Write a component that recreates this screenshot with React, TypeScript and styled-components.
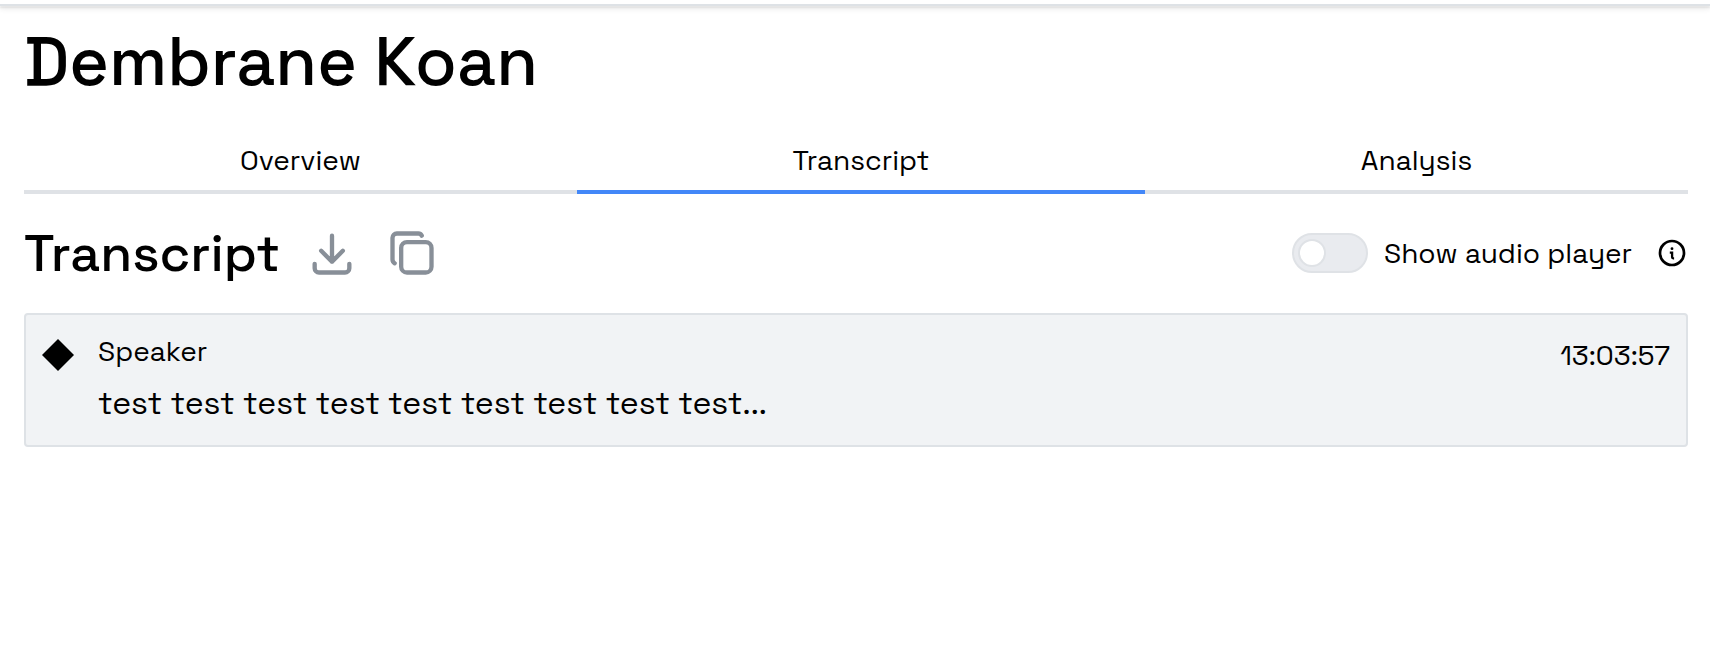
import React from "react";
import styled, { createGlobalStyle } from "styled-components";

const GlobalStyle = createGlobalStyle`
  * { box-sizing: border-box; }
  body {
    margin: 0;
    background: #fff;
    color: #000;
    font-family: "Space Grotesk", Inter, "Liberation Sans", sans-serif;
    -webkit-font-smoothing: antialiased;
  }
`;

const Page = styled.main`
  height: 648px;
  padding-top: 4px;
  overflow: hidden;
`;

const HeaderEdge = styled.div`
  height: 2px;
  background: #dee2e6;
  box-shadow: 0 2px 2px rgba(0, 0, 0, 0.1), 0 3px 5px rgba(0, 0, 0, 0.12);
  clip-path: inset(0 0 -16px 0);
`;

const Content = styled.div`
  display: flex;
  flex-direction: column;
  padding: 0 22px 0 24px;
`;

const Label = styled.span<{ $size?: number }>`
  font-size: ${(p) => p.$size ?? 28}px;
  line-height: 40px;
  white-space: nowrap;
`;

const Title = styled.h1`
  margin: 16px 0 0;
  font-size: 68px;
  font-weight: 500;
  line-height: 80px;
  white-space: nowrap;
`;

const TabList = styled.nav`
  display: grid;
  grid-template-columns: 553px 568px 543px;
  margin-top: 28px;
`;

const Tab = styled.button<{ $active?: boolean }>`
  height: 64px;
  padding: 8px 0;
  border: 0;
  border-bottom: 4px solid ${(p) => (p.$active ? "#4287f8" : "#dfe2e6")};
  background: none;
  color: inherit;
  font: inherit;
  text-align: center;
`;

const Toolbar = styled.div`
  display: flex;
  align-items: center;
  height: 72px;
  margin-top: 23px;
`;

const Heading = styled.h2`
  width: 282px;
  margin: 0;
  font-size: 52px;
  font-weight: 500;
  line-height: 70px;
  white-space: nowrap;
`;

const IconButton = styled.button`
  display: flex;
  width: 52px;
  height: 52px;
  margin-right: 28px;
  padding: 0;
  border: 0;
  background: none;
  color: #888f98;
`;

const PlayerToggle = styled.div`
  display: flex;
  align-items: center;
  margin-left: auto;
`;

const Switch = styled.span`
  display: flex;
  align-items: center;
  width: 76px;
  height: 40px;
  margin-right: 16px;
  padding-left: 4px;
  border: 2px solid #dfe2e6;
  border-radius: 20px;
  background: #e9ebef;
`;

const Thumb = styled.span`
  width: 28px;
  height: 28px;
  border: 2px solid #dfe2e6;
  border-radius: 50%;
  background: #fff;
`;

const ToggleText = styled.div`
  width: 272px;
`;

const Card = styled.article`
  display: flex;
  align-items: flex-start;
  height: 134px;
  margin-top: 24px;
  padding: 16px;
  border: 2px solid #dee2e6;
  border-radius: 4px;
  background: #f1f3f5;
`;

const Diamond = styled.svg`
  flex: none;
  margin: 8px 24px 0 0;
`;

const Message = styled.div`
  display: flex;
  flex: 1;
  flex-direction: column;
  gap: 12px;
`;

const Time = styled.time`
  margin-top: 4px;
`;

const stroke = {
  fill: "none",
  stroke: "currentColor",
  strokeWidth: 2,
  strokeLinecap: "round",
  strokeLinejoin: "round",
} as const;

const DownloadIcon = () => (
  <svg width="52" height="52" viewBox="0 0 24 24" {...stroke}>
    <path d="M4 17v2a2 2 0 0 0 2 2h12a2 2 0 0 0 2-2v-2M7 11l5 5 5-5M12 4v12" />
  </svg>
);

const CopyIcon = () => (
  <svg width="52" height="52" viewBox="0 0 24 24" {...stroke}>
    <rect x="7" y="7" width="14" height="14" rx="2.667" />
    <path d="M4.012 16.737A2.005 2.005 0 0 1 3 15V5c0-1.1.9-2 2-2h10c.75 0 1.158.385 1.5 1" />
  </svg>
);

const InfoIcon = () => (
  <svg width="32" height="32" viewBox="0 0 32 32" fill="none" stroke="#000">
    <circle cx="16" cy="16" r="12" strokeWidth="2.7" />
    <path d="M13.8 15.7h2.3v4.6c0 .7.4 1 1 1h1" strokeWidth="2.3" />
    <circle cx="16" cy="11.7" r="1.4" fill="#000" stroke="none" />
  </svg>
);

export default function App() {
  return (
    <Page>
      <GlobalStyle />
      <HeaderEdge />
      <Content>
        <Title>Dembrane Koan</Title>
        <TabList>
          <Tab><Label>Overview</Label></Tab>
          <Tab $active><Label>Transcript</Label></Tab>
          <Tab><Label>Analysis</Label></Tab>
        </TabList>
        <Toolbar>
          <Heading>Transcript</Heading>
          <IconButton aria-label="Download transcript"><DownloadIcon /></IconButton>
          <IconButton aria-label="Copy transcript"><CopyIcon /></IconButton>
          <PlayerToggle>
            <Switch role="switch" aria-checked="false"><Thumb /></Switch>
            <ToggleText><Label>Show audio player</Label></ToggleText>
            <InfoIcon />
          </PlayerToggle>
        </Toolbar>
        <Card>
          <Diamond width="32" height="32" viewBox="0 0 32 32">
            <path d="M16 0l16 16-16 16L0 16z" />
          </Diamond>
          <Message>
            <Label>Speaker</Label>
            <Label $size={32}>test test test test test test test test test...</Label>
          </Message>
          <Time><Label>13:03:57</Label></Time>
        </Card>
      </Content>
    </Page>
  );
}
